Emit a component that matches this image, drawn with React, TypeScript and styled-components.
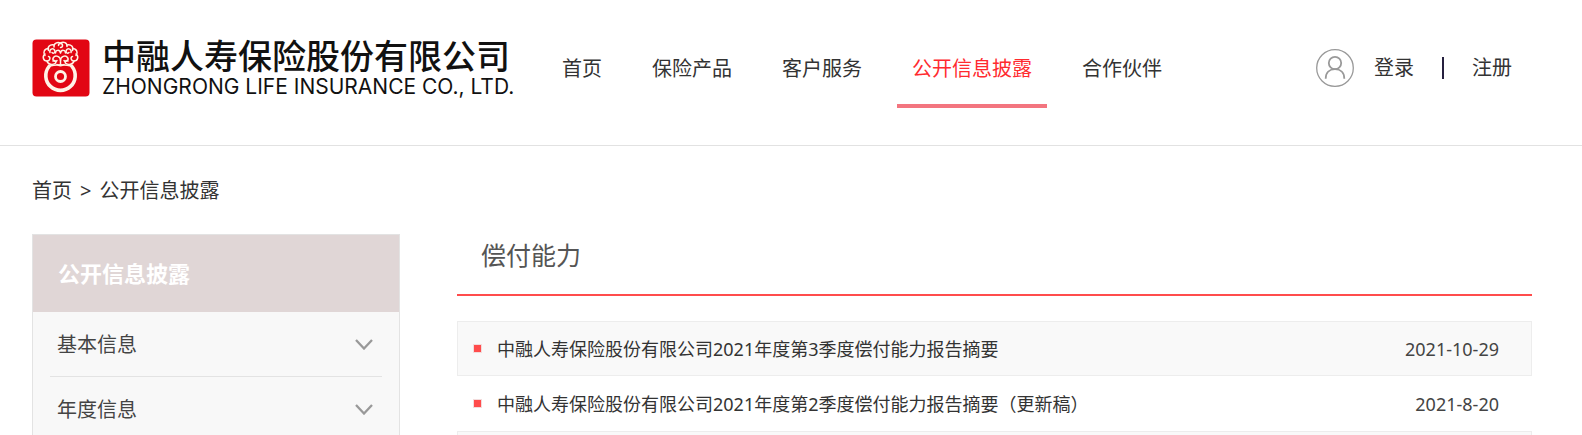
import React from 'react';
import styled, { createGlobalStyle } from 'styled-components';

const GlobalStyle = createGlobalStyle`
  * { box-sizing: border-box; }
  body {
    margin: 0;
    background: #fff;
    color: #333;
    font: 20px/28px "Noto Sans", "Noto Sans CJK SC", sans-serif;
  }
  a { color: inherit; text-decoration: none; }
  ul, ol { list-style: none; margin: 0; padding: 0; }
  h1, h2, p { margin: 0; font-weight: 400; }
  svg { flex: none; }
`;

const Page = styled.div`
  display: flex;
  flex-direction: column;
  height: 100vh;
  overflow: hidden;
`;

const Header = styled.header`
  display: flex;
  align-items: center;
  flex: none;
  height: 146px;
  padding: 0 70px 10px 32px;
  border-bottom: 1px solid #e2e2e2;
`;

const Brand = styled.a`
  display: flex;
  align-items: center;
  gap: 12px;
  flex: none;
  width: 480px;
  color: #111;
  white-space: nowrap;
`;

const BrandText = styled.span`
  display: flex;
  flex-direction: column;
`;

const BrandName = styled.span`
  font: 500 34px/38px "Noto Sans CJK SC", sans-serif;
`;

const BrandLatin = styled.span`
  font: 400 21px/26px Inter, sans-serif;
`;

const Nav = styled.nav`
  display: flex;
  flex: 1;
  gap: 20px;
  padding: 28px 0 0 35px;
`;

const NavLink = styled.a<{ $active?: boolean }>`
  padding: 0 15px 21px;
  border-bottom: 4px solid ${(p) => (p.$active ? '#f3757f' : 'transparent')};
  color: ${(p) => (p.$active ? '#ff2a2f' : '#333')};
  white-space: nowrap;
`;

const Account = styled.div`
  display: flex;
  align-items: center;
  flex: none;
`;

const AccountLink = styled.a`
  margin-left: 20px;
`;

const Separator = styled.span`
  width: 2px;
  height: 22px;
  margin: 0 8px 0 28px;
  background: #26203f;
`;

const Breadcrumb = styled.nav`
  display: flex;
  flex: none;
  gap: 8px;
  padding: 31px 32px 29px;
`;

const Body = styled.div`
  display: flex;
  flex: 1;
  gap: 57px;
  min-height: 0;
  padding: 0 50px 0 32px;
`;

const Sidebar = styled.aside`
  flex: none;
  width: 368px;
  border: 1px solid #e3e3e3;
  border-bottom: 0;
  background: #f8f8f8;
`;

const SidebarTitle = styled.h2`
  padding: 24px 25px;
  background: #e0d6d6;
  color: #fff;
  font-size: 22px;
  font-weight: 700;
  line-height: 29px;
`;

const SidebarItem = styled.li`
  margin: 0 17px;
  border-bottom: 1px solid #e3e3e3;
`;

const SidebarButton = styled.button`
  display: flex;
  align-items: center;
  justify-content: space-between;
  width: 100%;
  height: 64px;
  padding: 1px 9px 0 7px;
  border: 0;
  background: none;
  color: #444;
  font: inherit;
  cursor: pointer;
`;

const Main = styled.main`
  flex: 1;
  min-width: 0;
`;

const MainTitle = styled.h1`
  padding: 3px 24px 21px;
  border-bottom: 2px solid #ff4c4c;
  color: #555;
  font-size: 25px;
  line-height: 36px;
`;

const Reports = styled.ul`
  margin-top: 25px;
`;

const Report = styled.li<{ $shaded?: boolean }>`
  display: flex;
  align-items: center;
  height: 55px;
  padding: 0 32px 0 15px;
  border: 1px solid ${(p) => (p.$shaded ? '#ededed' : 'transparent')};
  background: ${(p) => (p.$shaded ? '#f9f9f9' : '#fff')};
  font-size: 18px;
`;

const Bullet = styled.span`
  width: 9px;
  height: 9px;
  border: 1px solid #f3dcdc;
  background: #ff4c4c;
`;

const ReportLink = styled.a`
  flex: 1;
  margin-left: 15px;
`;

const ReportDate = styled.time`
  color: #444;
`;

const Emblem = () => (
  <svg width="58" height="58" viewBox="0 0 58 58" fill="none" stroke="#fff3e6" strokeLinecap="round" aria-hidden="true">
    <rect x="0.5" y="0.5" width="57" height="57" rx="4" fill="#e20613" stroke="none" />
    <g strokeWidth="1.5">
      <path d="M28.5 8.5a2 2 0 1 0-2-2M28.5 4c3-2 7 0 6.500 3.500" />
      <path d="M28.500 4c-3-1-7 0-6.500 4M22 6c-4-1-7 2-5.500 5.500M35 6c4-1 7 2 5.500 5.500" />
      <path d="M16.500 9.500c-4 0-6 4-3.500 7M40.500 9.500c4 0 6 4 3.500 7" />
      <path d="M13 15c-3 2-2 7 2 7 3 0 4-4 1.500-4.500M44 15c3 2 2 7-2 7-3 0-4-4-1.500-4.500" />
      <path d="M18 13.500c-1-3 3-5 4.500-2.500s-1 4-2.500 2.500M39 13.500c1-3-3-5-4.500-2.500s1 4 2.500 2.500" />
      <path d="M28.500 14c-1-4-5-3-5 0M28.500 14c1-4 5-3 5 0" />
      <path d="M28.500 21.500c0-4-5-6-7-3s2 5 3.500 3M28.500 21.500c0-4 5-6 7-3s-2 5-3.500 3" />
      <path d="M15 22c1 4 6 4 8 2.500s0-4-2-2.500M42 22c-1 4-6 4-8 2.500s0-4 2-2.500" />
      <path d="M28.500 21.500v3.500M25 25.500c1.500 1.500 5.500 1.500 7 0" />
    </g>
    <path d="M17 27.500A14.700 14.700 0 1 0 40 27.500" strokeWidth="3.600" />
    <path d="M17 27.500c5-2.500 18-2.500 23 0" strokeWidth="1.500" />
    <circle cx="28.500" cy="37.500" r="5" strokeWidth="2.800" />
  </svg>
);

const UserIcon = () => (
  <svg width="38" height="38" viewBox="0 0 38 38" fill="none" stroke="#999" aria-hidden="true">
    <circle cx="19" cy="19" r="18.300" strokeWidth="1.300" />
    <circle cx="19" cy="14" r="6.200" strokeWidth="1.800" />
    <path d="M9.700 29.700c0-6 3.800-9.500 9.300-9.500s9.300 3.500 9.300 9.500" strokeWidth="1.800" />
  </svg>
);

const Chevron = () => (
  <svg width="18" height="11" viewBox="0 0 18 11" fill="none" stroke="#999" strokeWidth="2.300" aria-hidden="true">
    <path d="M1 1l8 8.500L17 1" />
  </svg>
);

const navItems = ['首页', '保险产品', '客户服务', '公开信息披露', '合作伙伴'];
const sections = ['基本信息', '年度信息'];
const reports = [
  { title: '中融人寿保险股份有限公司2021年度第3季度偿付能力报告摘要', date: '2021-10-29' },
  { title: '中融人寿保险股份有限公司2021年度第2季度偿付能力报告摘要（更新稿）', date: '2021-8-20' },
];

export default function App() {
  return (
    <Page lang="zh-CN">
      <GlobalStyle />
      <Header>
        <Brand href="#">
          <Emblem />
          <BrandText>
            <BrandName>中融人寿保险股份有限公司</BrandName>
            <BrandLatin>ZHONGRONG LIFE INSURANCE CO., LTD.</BrandLatin>
          </BrandText>
        </Brand>
        <Nav>
          {navItems.map((item) => (
            <NavLink key={item} href="#" $active={item === '公开信息披露'}>{item}</NavLink>
          ))}
        </Nav>
        <Account>
          <UserIcon />
          <AccountLink href="#">登录</AccountLink>
          <Separator />
          <AccountLink href="#">注册</AccountLink>
        </Account>
      </Header>
      <Breadcrumb>
        <a href="#">首页</a>
        <span>&gt;</span>
        <a href="#">公开信息披露</a>
      </Breadcrumb>
      <Body>
        <Sidebar>
          <SidebarTitle>公开信息披露</SidebarTitle>
          <ul>
            {sections.map((name) => (
              <SidebarItem key={name}>
                <SidebarButton type="button" aria-expanded="false">
                  {name}
                  <Chevron />
                </SidebarButton>
              </SidebarItem>
            ))}
          </ul>
        </Sidebar>
        <Main>
          <MainTitle>偿付能力</MainTitle>
          <Reports>
            {reports.map((report, i) => (
              <Report key={report.title} $shaded={i % 2 === 0}>
                <Bullet />
                <ReportLink href="#">{report.title}</ReportLink>
                <ReportDate>{report.date}</ReportDate>
              </Report>
            ))}
            <Report $shaded aria-hidden="true" />
          </Reports>
        </Main>
      </Body>
    </Page>
  );
}
